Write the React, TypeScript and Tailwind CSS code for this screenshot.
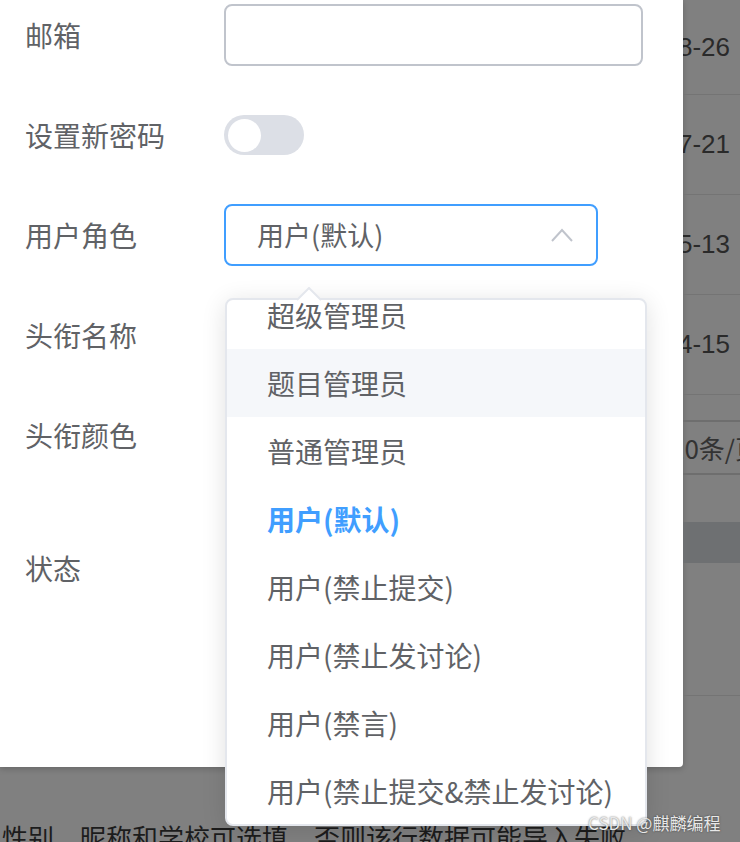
import React from "react";

const roles = [
    "超级管理员",
    "题目管理员",
    "普通管理员",
    "用户(默认)",
    "用户(禁止提交)",
    "用户(禁止发讨论)",
    "用户(禁言)",
    "用户(禁止提交&禁止发讨论)",
];

const dates = ["2021-08-26", "2021-07-21", "2021-05-13", "2021-04-15"];

function FormRow({ label, children, className = "" }: { label: string; children?: React.ReactNode; className?: string }) {
    return (
        <div className={`flex h-[62px] items-center ${className}`}>
            <label className="w-[224px] shrink-0 pl-[25px] text-[28px] text-[#606266]">{label}</label>
            <div className="flex items-center">{children}</div>
        </div>
    );
}

function RoleDropdown() {
    return (
        <div className="absolute left-[225px] top-[298px] h-[528px] w-[422px] rounded-[8px] border-2 border-[#e4e7ed] bg-white shadow-[0_4px_24px_rgba(0,0,0,0.12)]">
            <svg
                className="absolute left-[69px] top-[-13px]"
                width="26"
                height="14"
                viewBox="0 0 26 14"
            >
                <polygon points="1,13 13,1 25,13" fill="#ffffff" />
                <polyline points="1,13 13,1 25,13" fill="none" stroke="#e4e7ed" strokeWidth="2" />
            </svg>
            <div className="h-full overflow-hidden rounded-[6px]">
                <ul className="mt-[-19px]">
                    {roles.map((role, i) => (
                        <li
                            key={role}
                            className={`flex h-[68px] items-center whitespace-nowrap pl-[40px] text-[28px] ${
                                i === 1 ? "bg-[#f5f7fa]" : ""
                            } ${i === 3 ? "font-bold text-[#409eff]" : "text-[#606266]"}`}
                        >
                            {role}
                        </li>
                    ))}
                </ul>
            </div>
        </div>
    );
}

export default function App() {
    return (
        <div
            className="relative h-[842px] w-[740px] overflow-hidden bg-[#808080]"
            style={{ fontFamily: '"Noto Sans CJK SC", "Liberation Sans", sans-serif' }}
        >
            <div className="flex">
                {/* dialog */}
                <div className="h-[767px] w-[683px] shrink-0 rounded-br-[4px] bg-white pt-[4px] shadow-[0_2px_6px_rgba(0,0,0,0.2)]">
                    <div className="flex flex-col gap-[38px]">
                        <FormRow label="邮箱">
                            <div className="h-[62px] w-[419px] rounded-[8px] border-2 border-[#c0c4cc] bg-white" />
                        </FormRow>
                        <FormRow label="设置新密码">
                            <div className="flex h-[40px] w-[80px] items-center rounded-full bg-[#dcdfe6] pl-[4px]">
                                <div className="h-[33px] w-[33px] rounded-full bg-white" />
                            </div>
                        </FormRow>
                        <FormRow label="用户角色">
                            <div className="flex h-[62px] w-[374px] items-center justify-between rounded-[8px] border-2 border-[#409eff] pl-[31px] pr-[23px]">
                                <span className="text-[27px] text-[#606266]">用户(默认)</span>
                                <svg width="22" height="14" viewBox="0 0 22 14">
                                    <polyline points="1,13 11,2 21,13" fill="none" stroke="#c0c4cc" strokeWidth="2" />
                                </svg>
                            </div>
                        </FormRow>
                        <FormRow label="头衔名称" />
                        <FormRow label="头衔颜色" />
                        <FormRow label="状态" className="mt-[33px]" />
                    </div>
                </div>

                {/* table behind the overlay */}
                <div className="w-[57px] overflow-hidden text-[26px] text-[#2a2a2a]" style={{ fontFamily: '"Liberation Sans", "Noto Sans CJK SC", sans-serif' }}>
                    {dates.map((d, i) => (
                        <div
                            key={d}
                            className={`flex items-center justify-end whitespace-nowrap pr-[10px] ${
                                i === 0 ? "h-[94px]" : "h-[100px] border-t border-[#747474]"
                            }`}
                        >
                            {d}
                        </div>
                    ))}
                    <div className="h-[26px] border-t border-[#747474]" />
                    <div className="flex h-[55px] items-center whitespace-nowrap border-y-2 border-[#6e6e6e] text-[#333]" style={{ fontFamily: '"Noto Sans CJK SC", sans-serif' }}>
                        <span className="ml-[-13px]">10条/页</span>
                    </div>
                    <div className="h-[47px]" />
                    <div className="h-[41px] bg-[#6e7072]" />
                    <div className="h-[133px] border-b border-[#747474]" />
                </div>
            </div>

            <p className="mt-[51px] whitespace-nowrap pl-[2px] text-[26px] leading-[38px] text-[#1c1c1c]">
                性别、昵称和学校可选填，否则该行数据可能导入失败
            </p>

            <RoleDropdown />

            <span
                className="absolute left-[588px] top-[810px] whitespace-nowrap text-[17px] text-[#e8e8e8] [text-shadow:0_0_2px_rgba(0,0,0,0.6)]"
            >
                CSDN @麒麟编程
            </span>
        </div>
    );
}
